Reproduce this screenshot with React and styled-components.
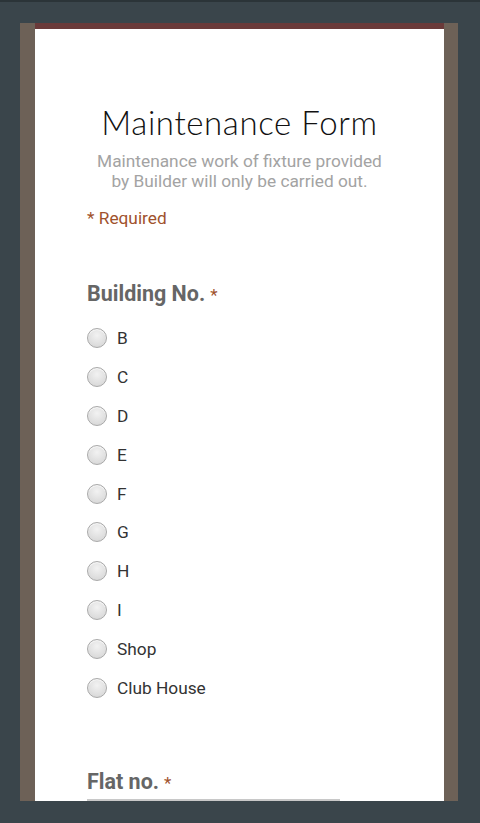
import * as React from "react";
import styled, { createGlobalStyle } from "styled-components";

const GlobalStyle = createGlobalStyle`
  html, body {
    margin: 0;
    padding: 0;
    background: #3a454b;
    font-family: Roboto, "Liberation Sans", sans-serif;
  }
`;

const Screen = styled.div`
  width: 480px;
  height: 823px;
  overflow: hidden;
  background: #3a454b;
  border-top: 2px solid #2b3438;
  box-sizing: border-box;
  padding-top: 21px;
`;

const Frame = styled.div`
  margin-left: 20px;
  width: 438px;
  height: 778px;
  box-sizing: border-box;
  background: #6d6157;
  padding: 0 14px 0 15px;
  overflow: hidden;
`;

const Card = styled.div`
  height: 100%;
  background: #fff;
  border-top: 6px solid #6a3a3a;
  box-sizing: border-box;
  padding: 0 52px;
`;

const Header = styled.div`
  padding-top: 73px;
  text-align: center;
`;

const Title = styled.h1`
  margin: 0;
  font-family: Lato, "Open Sans", sans-serif;
  font-weight: 300;
  font-size: 33px;
  color: #111;
  letter-spacing: 0.6px;
`;

const Subtitle = styled.p`
  margin: 9px -20px 0;
  font-size: 17.3px;
  line-height: 20px;
  color: #a3a3a3;
`;

const Required = styled.div`
  margin-top: 17px;
  font-size: 17.3px;
  color: #a0522d;
`;

const Question = styled.div`
  margin-top: ${p => p.$gap}px;
  font-size: 21.5px;
  font-weight: 700;
  color: #666;
`;

const Star = styled.span`
  color: #a0522d;
  font-size: 17px;
  font-weight: 400;
  margin-left: 5px;
`;

const Options = styled.div`
  display: flex;
  flex-direction: column;
  margin-top: 13px;
`;

const Option = styled.label`
  display: flex;
  align-items: center;
  height: 38.8px;
  gap: 10px;
  font-size: 17.3px;
  color: #333;
`;

const Radio = styled.span`
  width: 18px;
  height: 18px;
  border-radius: 50%;
  border: 1px solid #a9a9a9;
  background: radial-gradient(circle at 50% 35%, #f2f2f2 0%, #dcdcdc 70%, #cfcfcf 100%);
  box-shadow: inset 0 1px 1px rgba(255, 255, 255, 0.8);
  flex: none;
`;

const Underline = styled.div`
  margin-top: 5px;
  width: 253px;
  height: 2px;
  background: #c8c8c8;
`;

const buildings = ["B", "C", "D", "E", "F", "G", "H", "I", "Shop", "Club House"];

export default function App() {
  return (
    <>
      <GlobalStyle />
      <Screen>
        <Frame>
          <Card>
            <Header>
              <Title>Maintenance Form</Title>
              <Subtitle>
                Maintenance work of fixture provided
                <br />
                by Builder will only be carried out.
              </Subtitle>
            </Header>
            <Required>* Required</Required>
            <Question $gap={53}>
              Building No.<Star>*</Star>
            </Question>
            <Options>
              {buildings.map(b => (
                <Option key={b}>
                  <Radio />
                  {b}
                </Option>
              ))}
            </Options>
            <Question $gap={62}>
              Flat no.<Star>*</Star>
            </Question>
            <Underline />
          </Card>
        </Frame>
      </Screen>
    </>
  );
}
